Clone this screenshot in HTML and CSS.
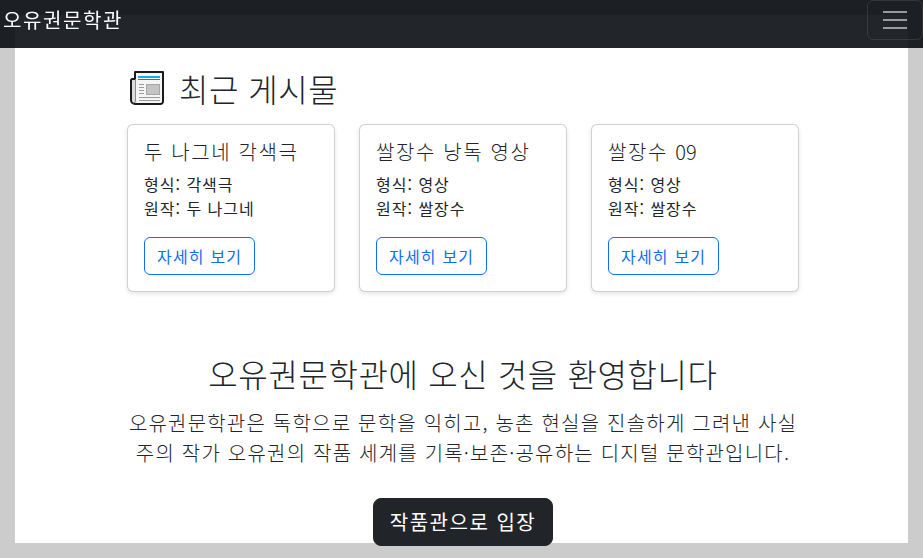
FILE: index.html
```html
<!DOCTYPE html>
<html lang="ko">
<head>
    <meta charset="UTF-8">
    <meta name="viewport" content="width=device-width, initial-scale=1.0">
    <title>오유권문학관</title>
    <link rel="stylesheet" href="styles.css">
</head>
<body>

<nav class="navbar">
    <a class="brand" href="#">오유권문학관</a>
    <button class="toggler" aria-label="메뉴">
        <span></span><span></span><span></span>
    </button>
</nav>

<main class="page">
    <div class="inner">
        <h2 class="section-title">
            <svg class="news-icon" viewBox="0 0 34 34" aria-hidden="true">
                <path d="M5 8H2.500A1.500 1.500 0 0 0 1 9.500V29a4 4 0 0 0 4 4h25a3 3 0 0 0 3-3V1H5z" fill="#dcdcdc" stroke="#1a1a1a" stroke-width="2" stroke-linejoin="round"/>
                <path d="M6 2h26v28a2 2 0 0 1-2 2H6.500A4 4 0 0 0 6 29z" fill="#f5f5f5"/>
                <path d="M5.500 8v21a2.500 2.500 0 0 1-2 3" fill="none" stroke="#8a8a8a" stroke-width="1"/>
                <rect x="8" y="5" width="22" height="2" fill="#00b4f0"/>
                <rect x="8" y="8" width="22" height="1" fill="#666"/>
                <rect x="16.500" y="13.500" width="13" height="10" fill="#c4c4c4" stroke="#a6a6a6"/>
                <path d="M9 13.500h5M9 16.500h5M9 19.500h5M9 22.500h5M9 26.500h21M9 29.500h21" stroke="#9a9a9a" stroke-width="1"/>
            </svg>
            최근 게시물
        </h2>

        <div class="cards">
            <div class="card">
                <h5 class="card-title">두 나그네 각색극</h5>
                <p class="card-text">형식: 각색극<br>원작: 두 나그네</p>
                <a class="btn-outline" href="#">자세히 보기</a>
            </div>
            <div class="card">
                <h5 class="card-title">쌀장수 낭독 영상</h5>
                <p class="card-text">형식: 영상<br>원작: 쌀장수</p>
                <a class="btn-outline" href="#">자세히 보기</a>
            </div>
            <div class="card">
                <h5 class="card-title">쌀장수 <span class="num">09</span></h5>
                <p class="card-text">형식: 영상<br>원작: 쌀장수</p>
                <a class="btn-outline" href="#">자세히 보기</a>
            </div>
        </div>

        <section class="welcome">
            <h2>오유권문학관에 오신 것을 환영합니다</h2>
            <p>오유권문학관은 독학으로 문학을 익히고, 농촌 현실을 진솔하게 그려낸 사실주의 작가 오유권의 작품 세계를 기록·보존·공유하는 디지털 문학관입니다.</p>
            <a class="btn-dark" href="#">작품관으로 입장</a>
        </section>
    </div>
</main>

</body>
</html>
```

FILE: styles.css
```css
html, body {
    height: 100%;
}
body {
    margin: 0;
    padding: 15px;
    box-sizing: border-box;
    overflow: hidden;
    background-color: #ccc;
    color: #212529;
    font-family: "Noto Sans CJK KR", "Noto Sans", sans-serif;
    font-size: 16px;
    line-height: 1.5;
}
a {
    text-decoration: none;
}

/* navbar */
.navbar {
    position: fixed;
    top: 0;
    left: 0;
    right: 0;
    height: 48px;
    background: rgba(3, 7, 13, 0.88);
}
.brand {
    position: absolute;
    left: 3px;
    top: 5px;
    color: #fff;
    font-size: 20px;
    line-height: 30px;
    letter-spacing: 1.6px;
}
.toggler {
    position: absolute;
    top: 0;
    right: 0;
    width: 56px;
    height: 40px;
    box-sizing: border-box;
    padding: 0;
    display: flex;
    flex-direction: column;
    align-items: center;
    justify-content: center;
    gap: 6px;
    background: transparent;
    border: 1px solid rgba(255, 255, 255, 0.1);
    border-radius: 6px;
}
.toggler span {
    width: 24px;
    height: 2px;
    background: rgba(255, 255, 255, 0.55);
}

/* page */
.page {
    height: 100%;
    padding-top: 33px;
    box-sizing: border-box;
    background: #fff;
}
.inner {
    width: 672px;
    margin-left: 112px;
}
.section-title {
    margin: 21px 0 17px;
    display: flex;
    align-items: center;
    gap: 15px;
    font-size: 32px;
    font-weight: 300;
    line-height: 38px;
    letter-spacing: 0.5px;
}
.news-icon {
    width: 34px;
    height: 34px;
    margin-left: 3px;
}

/* cards */
.cards {
    display: flex;
    gap: 24px;
}
.card {
    flex: 1;
    height: 168px;
    box-sizing: border-box;
    padding: 15px 16px;
    background: #fff;
    border: 1px solid rgba(0, 0, 0, 0.18);
    border-radius: 6px;
    box-shadow: 0 2px 4px rgba(0, 0, 0, 0.1);
}
.card-title {
    margin: 0 0 8px;
    font-size: 20px;
    font-weight: 300;
    line-height: 24px;
    letter-spacing: 1.6px;
}
.num {
    letter-spacing: 0;
}
.card-text {
    margin: 0 0 17px;
    font-size: 16px;
    line-height: 24px;
    letter-spacing: 1px;
}
.btn-outline {
    display: inline-block;
    padding: 6px 12px;
    color: #0d6efd;
    border: 1px solid #0d6efd;
    border-radius: 6px;
    font-size: 16px;
    line-height: 24px;
    letter-spacing: 1.2px;
}

/* welcome */
.welcome {
    margin-top: 62px;
    text-align: center;
}
.welcome h2 {
    margin: 0 0 16px;
    font-size: 32px;
    font-weight: 300;
    line-height: 38px;
    letter-spacing: 0.6px;
}
.welcome p {
    margin: 0 0 30px;
    font-size: 20px;
    font-weight: 300;
    line-height: 30px;
    letter-spacing: 1.2px;
}
.btn-dark {
    display: inline-block;
    padding: 8px 16px;
    background: #212529;
    color: #fff;
    border: 1px solid #212529;
    border-radius: 8px;
    font-size: 20px;
    line-height: 30px;
    letter-spacing: 1.5px;
}
```
